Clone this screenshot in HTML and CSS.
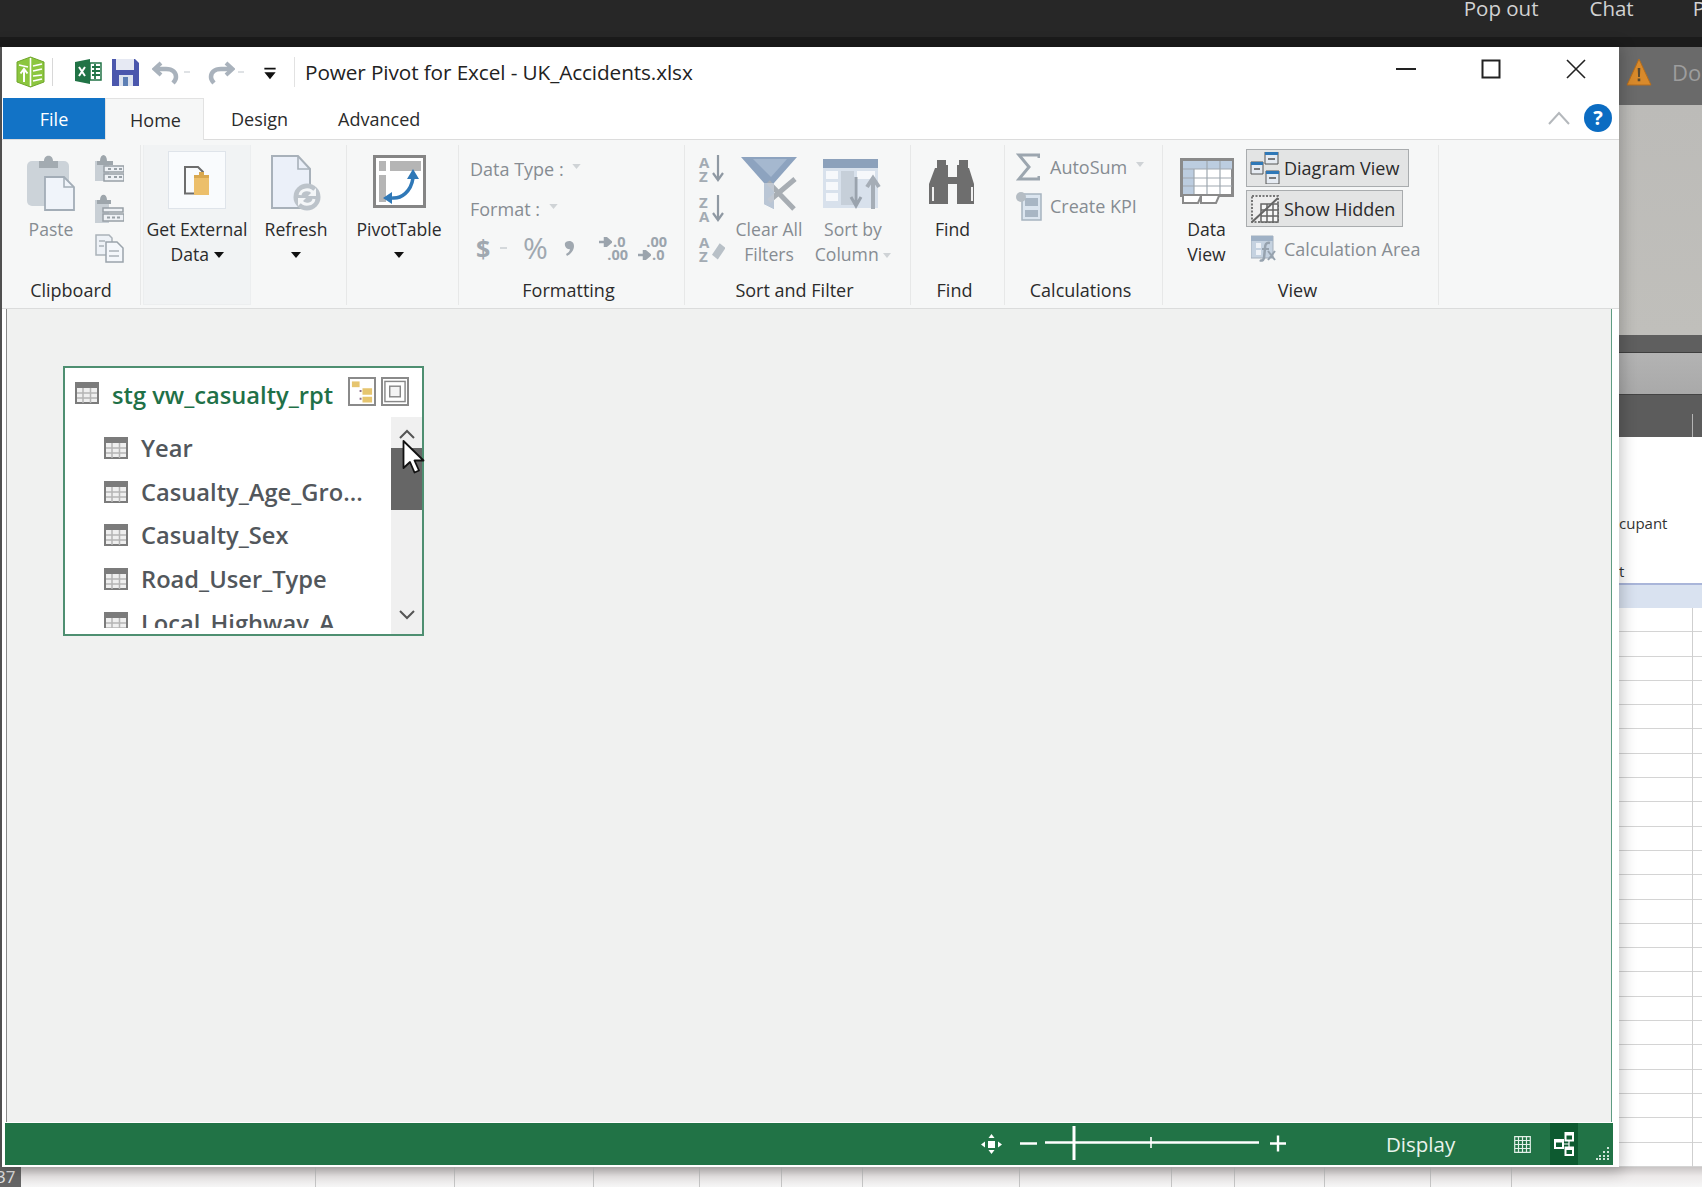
FILE: index.html
```html
<!DOCTYPE html>
<html lang="en">
<head>
<meta charset="utf-8">
<title>Power Pivot for Excel - UK_Accidents.xlsx</title>
<link rel="stylesheet" href="styles.css">
</head>
<body>
<svg class="defs" width="0" height="0">
  <symbol id="tbl" viewBox="0 0 24 22">
    <rect x="1" y="1" width="22" height="20" fill="#efefef" stroke="#7b7b7b" stroke-width="2"/>
    <rect x="1" y="1" width="22" height="5" fill="#7b7b7b"/>
    <path d="M2 11h20M2 16h20M8 6v15M15.500 6v15" stroke="#b5b5b5" stroke-width="1.500" fill="none"/>
  </symbol>
  <symbol id="dd" viewBox="0 0 10 6"><path d="M0 0h10L5 6z"/></symbol>
</svg>

<div class="topbar"><span>Pop out</span><span>Chat</span><span class="tb-p">P</span></div>
<div class="topstrip"></div>
<div class="desk">
  <div class="sliver"></div>
  <aside class="side">
    <div class="side-head"><svg width="26" height="28" viewBox="0 0 26 28"><path d="M13 1 25 27H1z" fill="#d98a2b" stroke="#b56d1d"/><path d="M11.700 10h2.600l-.4 9h-1.800zM11.700 20.500h2.600v2.800h-2.600z" fill="#5b4a30"/></svg><span>Do</span></div>
    <div class="side-grey"></div>
    <div class="side-dark1"></div>
    <div class="side-mid"></div>
    <div class="side-dark2"><i></i></div>
    <div class="side-text">
      <span>cupant</span>
      <span class="side-t">t</span>
    </div>
    <div class="side-band"></div>
    <div class="side-grid"></div>
  </aside>
</div>
<div class="sheetfoot">
  <div class="rownum">37</div><i></i><i></i><i></i><i></i><i></i><i></i><i></i><i></i><i></i><i></i><i></i><i></i><i></i>
</div>

<main class="window">
  <header class="titlebar">
    <svg class="q-pp" width="31" height="32" viewBox="0 0 31 32"><path d="M15.500 1 29 6v20l-13.500 5L2 26V6z" fill="#8cc63f" stroke="#6fa62c"/><path d="M15.500 2v28M18 10l9-2M18 15l9-2M18 20l9-1M18 25l9-2M4 9l9 2" stroke="#fff" stroke-width="1.600"/><path d="M9 26V14M5.500 17.500 9 13l3.500 4.500" stroke="#fff" stroke-width="2" fill="none"/></svg>
    <i class="q-sep1"></i>
    <svg class="q-xl" width="27" height="25" viewBox="0 0 27 25"><path d="M0 3 15 0v25L0 22z" fill="#217346"/><path d="M4 8l6 9M10 8l-6 9" stroke="#fff" stroke-width="2"/><path d="M15 4h11v17H15z" fill="#fff" stroke="#217346" stroke-width="1.500"/><path d="M17 8h8M17 12h8M17 16h8M20 5v15" stroke="#217346" stroke-width="1.800"/></svg>
    <svg class="q-save" width="27" height="28" viewBox="0 0 27 28"><path d="M0 1h23l4 4v23H0z" fill="#4b57ad"/><path d="M4 1h18v11H4z" fill="#e6e9f3"/><path d="M7 17h14v11H7z" fill="#dde3ef"/><path d="M11 19h5v9h-5z" fill="#5d7fb5"/></svg>
    <svg class="q-undo" width="29" height="26" viewBox="0 0 29 26"><path d="M9 4 2.500 10 9 16" fill="none" stroke="#a9b2bc" stroke-width="4"/><path d="M4 10h10c7 0 10 4 10 8 0 3-2 5-3 6" fill="none" stroke="#a9b2bc" stroke-width="4.500"/></svg>
    <i class="q-dash"></i>
    <svg class="q-redo" width="29" height="26" viewBox="0 0 29 26"><path d="M20 4l6.500 6-6.500 6" fill="none" stroke="#a9b2bc" stroke-width="4"/><path d="M25 10H15C8 10 5 14 5 18c0 3 2 5 3 6" fill="none" stroke="#a9b2bc" stroke-width="4.500"/></svg>
    <i class="q-dash"></i>
    <svg class="q-more" width="12" height="13" viewBox="0 0 13 15"><path d="M0 1h13v2H0zM0 6h13L6.500 14z" fill="#111"/></svg>
    <i class="q-sep2"></i>
    <h1 class="wintitle">Power Pivot for Excel - UK_Accidents.xlsx</h1>
    <div class="winctl">
      <svg width="20" height="20" viewBox="0 0 20 20"><path d="M0 10h20" stroke="#222" stroke-width="2"/></svg>
      <svg width="20" height="20" viewBox="0 0 20 20"><rect x="1.500" y="1.500" width="17" height="17" fill="none" stroke="#222" stroke-width="2"/></svg>
      <svg width="20" height="20" viewBox="0 0 20 20"><path d="M1 1l18 18M19 1 1 19" stroke="#222" stroke-width="1.600"/></svg>
    </div>
  </header>

  <nav class="tabs">
    <span class="tab tab-file">File</span>
    <span class="tab tab-home">Home</span>
    <span class="tab tab-design">Design</span>
    <span class="tab tab-adv">Advanced</span>
    <svg class="collapse" width="22" height="14" viewBox="0 0 22 14"><path d="M1 13 11 2l10 11" fill="none" stroke="#b4b8bc" stroke-width="2"/></svg>
    <span class="help">?</span>
  </nav>

  <section class="ribbon">
    <div class="group g-clip">
      <div class="gbody">
        <div class="tool tool-paste">
          <div class="slot"><svg width="48" height="56" viewBox="0 0 48 56"><rect x="0" y="6" width="42" height="45" rx="5" fill="#ccd3d9"/><path d="M12 6h5c0-7 9-7 9 0h5v7H12z" fill="#a3abb1"/><path d="M18 22h19l10 10v23H18z" fill="#f0f4fa" stroke="#a3adb7" stroke-width="1.800"/><path d="M37 22v10h10" fill="none" stroke="#a3adb7" stroke-width="1.500"/></svg></div>
          <span class="lbl off">Paste</span>
        </div>
        <div class="mini-stack">
          <svg width="29" height="29" viewBox="0 0 29 29"><rect y="7" width="14" height="20" fill="#c8cfd5"/><path d="M5 7c0-8 7-8 7 0h6v4H2V7z" fill="#9ea6ac"/><path d="M9 12h20v6H9zM9 20h20v7H9z" fill="#eef1f5" stroke="#98a0a6" stroke-width="1.500"/><path d="M13 15h3M19 15h3M24 15h3M13 23h3M19 23h3M24 23h3" stroke="#98a0a6" stroke-width="2"/></svg>
          <svg width="29" height="29" viewBox="0 0 29 29"><rect y="6" width="14" height="23" fill="#c8cfd5"/><path d="M5 6c0-7 7-7 7 0h4v4H2V6z" fill="#9ea6ac"/><path d="M8 14h20v4H8zM8 20h21v7H8z" fill="#eef1f5" stroke="#98a0a6" stroke-width="1.500"/><path d="M12 23.500h3M17 23.500h3M22 23.500h3" stroke="#98a0a6" stroke-width="2"/></svg>
          <svg width="29" height="29" viewBox="0 0 29 29"><path d="M1 1h13l3 3v17H1z" fill="#eef2f7" stroke="#aab2b9" stroke-width="1.500"/><path d="M11 8h11l6 6v14H11z" fill="#f4f7fb" stroke="#9ba4ac" stroke-width="1.500"/><path d="M4 7h6M4 12h5M14 17h10M14 22h10" stroke="#aab2b9" stroke-width="1.500"/></svg>
        </div>
      </div>
      <div class="glabel">Clipboard</div>
    </div>

    <div class="group g-ext">
      <div class="tool tool-ext">
        <div class="ext-btn"><svg width="26" height="29" viewBox="0 0 26 29"><path d="M12 27.500H1V1h13l5 5v4" fill="none" stroke="#6d6d6d" stroke-width="2"/><path d="M10 12h15v17H10z" fill="#ecbf6b"/><path d="M10 9h15v3H10zM15 6h5v3h-5z" fill="#d9a84f"/></svg></div>
        <span class="lbl">Get External<br>Data <svg class="dd dd-ink" width="10" height="6"><use href="#dd"/></svg></span>
      </div>
      <div class="tool tool-refresh">
        <div class="slot"><svg width="50" height="56" viewBox="0 0 50 56"><path d="M1 1h26l12 13v39H1z" fill="#ebf0f9" stroke="#a8b1ba" stroke-width="2"/><path d="M27 1v13h12" fill="none" stroke="#a8b1ba" stroke-width="1.600"/><circle cx="36" cy="42" r="13.500" fill="#bcc3ca"/><path d="M29 40c1-6 10-7 13-2M43 44c-1 6-10 7-13 2" fill="none" stroke="#f4f6f8" stroke-width="3"/><path d="M45 33v8h-8zM27 51v-8h8z" fill="#f4f6f8"/></svg></div>
        <span class="lbl">Refresh<br><svg class="dd dd-ink" width="10" height="6"><use href="#dd"/></svg></span>
      </div>
    </div>

    <div class="group g-pivot">
      <div class="tool tool-pivot">
        <div class="slot"><svg width="53" height="53" viewBox="0 0 53 53"><rect x="1.500" y="1.500" width="50" height="50" fill="#fff" stroke="#858585" stroke-width="3"/><path d="M17 6h31v10H17zM6 6h7v10H6zM6 20h7v27H6z" fill="#b5b5b5"/><path d="M19 43c9 1 19-6 21-20" fill="none" stroke="#2f78b7" stroke-width="3.500"/><path d="M40 14l6 10h-12zM19 37v12l-9-6z" fill="#2f78b7"/></svg></div>
        <span class="lbl">PivotTable<br><svg class="dd dd-ink" width="10" height="6"><use href="#dd"/></svg></span>
      </div>
    </div>

    <div class="group g-format">
      <div class="gbody format-body">
        <div class="fm-row"><span class="off">Data Type :</span><svg class="dd dd-off dt" width="9" height="5"><use href="#dd"/></svg></div>
        <div class="fm-row"><span class="off">Format :</span><svg class="dd dd-off ft" width="9" height="5"><use href="#dd"/></svg></div>
        <div class="fm-row fm-icons">
          <span class="fm-dollar">$</span><i class="fm-dash"></i>
          <span class="fm-pct">%</span>
          <svg class="fm-comma" width="12" height="18" viewBox="0 0 12 18"><path d="M1 4c2-3 9-3 9 3 0 4-3 8-7 10l-1-2c2-1 4-3 4-5-2 1-6-2-5-6z" fill="#a0a8b0"/></svg>
          <span class="fm-dec"><svg width="13" height="10" viewBox="0 0 13 10"><path d="M0 5h8M6 0l6 5-6 5z" stroke="#9ba4ad" stroke-width="2.500" fill="#9ba4ad"/></svg><b>.0</b><b class="wide">.00</b></span>
          <span class="fm-dec"><b class="wide">.00</b><svg width="13" height="10" viewBox="0 0 13 10"><path d="M0 5h8M6 0l6 5-6 5z" stroke="#9ba4ad" stroke-width="2.500" fill="#9ba4ad"/></svg><b>.0</b></span>
        </div>
      </div>
      <div class="glabel">Formatting</div>
    </div>

    <div class="group g-sort">
      <div class="gbody">
        <div class="sort-stack">
          <div class="az"><span>A<br>Z</span><svg width="12" height="27" viewBox="0 0 12 27"><path d="M6 0v24M1 18l5 7 5-7" fill="none" stroke="#8f99a3" stroke-width="2.200"/></svg></div>
          <div class="az"><span>Z<br>A</span><svg width="12" height="27" viewBox="0 0 12 27"><path d="M6 0v24M1 18l5 7 5-7" fill="none" stroke="#8f99a3" stroke-width="2.200"/></svg></div>
          <div class="az"><span>A<br>Z</span><svg width="14" height="27" viewBox="0 0 14 27"><path d="M8 8l6 5-8 12-6-5z" fill="#b8c0c7"/></svg></div>
        </div>
        <div class="tool tool-clear">
          <div class="slot"><svg width="56" height="56" viewBox="0 0 56 56"><path d="M0 2h56L33 28v26l-10-5V28z" fill="#8da3bf"/><path d="M12 4h34L30 22z" fill="#a5b8cf"/><path d="M27 27 53 54M54 24 28 46" stroke="#a7adb3" stroke-width="5"/><path d="M23 28v21l10 5V28z" fill="#c9d2dc" opacity=".75"/></svg></div>
          <span class="lbl off">Clear All<br>Filters</span>
        </div>
        <div class="tool tool-bycol">
          <div class="slot"><svg width="60" height="56" viewBox="0 0 60 56"><path d="M0 4h55v49H0z" fill="#d8e1ec"/><path d="M0 4h55v9H0z" fill="#8ca1bb"/><path d="M3 16h12v8H3zM3 27h12v8H3zM3 38h12v8H3zM34 16h18v8H34z" fill="#f6f8fb"/><path d="M18 16h13v34H18z" fill="#c6cfd9"/><path d="M33 22v28M28 42l5 9 5-9" fill="none" stroke="#9aa3ad" stroke-width="3"/><path d="M50 54V24M44 32l6-9 6 9" fill="none" stroke="#a5adb6" stroke-width="4"/></svg></div>
          <span class="lbl off">Sort by<br>Column <svg class="dd dd-off" width="8" height="5"><use href="#dd"/></svg></span>
        </div>
      </div>
      <div class="glabel">Sort and Filter</div>
    </div>

    <div class="group g-find">
      <div class="gbody">
        <div class="tool tool-find">
          <div class="slot"><svg width="47" height="44" viewBox="0 0 47 44"><path d="M8 0h9v5h2v12h9V5h2V0h9v8h1l5 16v20H28V24h-9v20H0V24L6 8h2z" fill="#6e6e6e"/><path d="M3 27v14h2V27zM44 27v14h-2V27z" fill="#f0f0f0"/></svg></div>
          <span class="lbl">Find</span>
        </div>
      </div>
      <div class="glabel">Find</div>
    </div>

    <div class="group g-calc">
      <div class="gbody calc-body">
        <div class="calc-row"><span class="calc-ic"><svg width="24" height="28" viewBox="0 0 24 28"><path d="M23 5V2H3l10 12L3 26h20v-3" fill="none" stroke="#9ca6af" stroke-width="3"/></svg></span><span class="off">AutoSum</span><svg class="dd dd-off as" width="8" height="5"><use href="#dd"/></svg></div>
        <div class="calc-row"><span class="calc-ic"><svg width="26" height="30" viewBox="0 0 26 30"><path d="M6 3h19v26H6z" fill="#dbe5ef" stroke="#a7b4c0" stroke-width="1.500"/><path d="M9 7h13v8H9zM9 19h13v7H9z" fill="#a8b6c4"/><circle cx="5" cy="6" r="5" fill="#b5bdc4"/></svg></span><span class="off">Create KPI</span></div>
      </div>
      <div class="glabel">Calculations</div>
    </div>

    <div class="group g-view">
      <div class="gbody">
        <div class="tool tool-data">
          <div class="slot"><svg width="54" height="47" viewBox="0 0 54 47"><path d="M1.500 1.500h51v36h-51z" fill="#fff" stroke="#8a8a8a" stroke-width="3"/><path d="M3 3h49v8H3zM3 11h11v25H3z" fill="#bccde0"/><path d="M14 11v25M27 3v33M40 3v33M3 11h49M3 20h49M3 28h49" stroke="#9fa8b0" stroke-width="1.200"/><path d="M3 38v7h15l3-7M21 38v7h15l3-7" fill="#fff" stroke="#8a8a8a" stroke-width="2"/></svg></div>
          <span class="lbl">Data<br>View</span>
        </div>
        <div class="view-stack">
          <div class="vbtn vbtn-on vb-diagram"><svg width="30" height="32" viewBox="0 0 30 32"><path d="M1 10h12v12H1z" fill="#e6ebf2" stroke="#555"/><path d="M1 10h12v3H1z" fill="#2f78b7"/><path d="M15 0h13v12H15z" fill="#e6ebf2" stroke="#555"/><path d="M15 0h13v3H15z" fill="#2f78b7"/><path d="M16 19h13v13H16z" fill="#e6ebf2" stroke="#555"/><path d="M16 19h13v3H16z" fill="#2f78b7"/><path d="M4 17h6M18 7h7M19 26h7" stroke="#555" stroke-width="1.500"/></svg><span>Diagram View</span></div>
          <div class="vbtn vbtn-on vb-hidden"><svg width="28" height="28" viewBox="0 0 28 28"><path d="M1 1h26v26H1z" fill="#eee" stroke="#777" stroke-width="2" stroke-dasharray="2 1.500"/><path d="M10 9h17v18H10z" fill="#f7f7f7" stroke="#666" stroke-width="1.500"/><path d="M10 15h17M10 21h17M16 9v18M22 9v18" stroke="#666" stroke-width="1.500"/><path d="M1 27 27 3" stroke="#666" stroke-width="2"/></svg><span>Show Hidden</span></div>
          <div class="vbtn vb-calc"><svg width="27" height="28" viewBox="0 0 27 28"><path d="M0 1h22v22H0z" fill="#c5d2e0" stroke="#a4b0bc"/><path d="M0 1h22v5H0z" fill="#9fb1c5"/><path d="M5 8h5v5H5zM5 15h5v5H5z" fill="#eef2f7"/><path d="M19 8c-4-1-5 2-5 5l-1 10c-1 3-3 3-4 2" fill="none" stroke="#96a2ae" stroke-width="2.500"/><path d="M11 14h7M17 16l7 9M24 16l-7 9" stroke="#96a2ae" stroke-width="2"/></svg><span class="off">Calculation Area</span></div>
        </div>
      </div>
      <div class="glabel">View</div>
    </div>
  </section>

  <section class="canvas">
    <article class="node">
      <div class="node-head">
        <svg class="node-ic" width="24" height="22"><use href="#tbl"/></svg>
        <h2 class="node-title">stg vw_casualty_rpt</h2>
        <span class="node-btn"><svg width="25" height="25" viewBox="0 0 25 25"><path d="M2 2h8v6H2z" fill="#e6c56f"/><path d="M13 9h10v7H13zM13 18h10v6H13z" fill="#e6c56f"/><path d="M10 11h2v2h-2zM10 19h2v2h-2z" fill="#8a6a8a"/></svg></span>
        <span class="node-btn"><svg width="25" height="25" viewBox="0 0 25 25"><rect x="2" y="2" width="21" height="21" fill="none" stroke="#888" stroke-width="1.500"/><rect x="7" y="7" width="11" height="11" fill="#f4f4f4" stroke="#888" stroke-width="1.500"/></svg></span>
      </div>
      <div class="node-body">
        <ul class="fields">
          <li><svg width="24" height="22"><use href="#tbl"/></svg>Year</li>
          <li><svg width="24" height="22"><use href="#tbl"/></svg>Casualty_Age_Gro...</li>
          <li><svg width="24" height="22"><use href="#tbl"/></svg>Casualty_Sex</li>
          <li><svg width="24" height="22"><use href="#tbl"/></svg>Road_User_Type</li>
          <li><svg width="24" height="22"><use href="#tbl"/></svg>Local_Highway_A...</li>
        </ul>
        <div class="scroll">
          <div class="sc-btn sc-up"><svg width="16" height="10" viewBox="0 0 16 10"><path d="M1 9l7-7 7 7" fill="none" stroke="#555" stroke-width="2"/></svg></div>
          <div class="sc-thumb"></div>
          <div class="sc-track"></div>
          <div class="sc-btn sc-down"><svg width="16" height="10" viewBox="0 0 16 10"><path d="M1 1l7 7 7-7" fill="none" stroke="#555" stroke-width="2"/></svg></div>
        </div>
      </div>
      <svg class="cursor" width="23" height="34" viewBox="0 0 23 34"><path d="M1.500 1v27l6.500-6 4.500 10.500 4.500-2-4.500-10h9z" fill="#fff" stroke="#111" stroke-width="1.800" stroke-linejoin="round"/></svg>
    </article>
  </section>

  <footer class="status">
    <svg class="st-move" width="21" height="22" viewBox="0 0 21 22"><rect x="7" y="8" width="7" height="7" fill="#fff"/><path d="M10.500 1l3 4h-6zM10.500 21l-3-4h6zM0 11.500l4-3v6zM21 11.500l-4 3v-6z" fill="#fff"/></svg>
    <svg class="st-zoom" width="266" height="42" viewBox="0 0 266 42"><path d="M0 20.500h17M25 19.500h214M250 20.500h16M258 12.500v16" stroke="#fff" stroke-width="2.400"/><path d="M54 3v34" stroke="#fff" stroke-width="3"/><path d="M131 14v11" stroke="#fff" stroke-width="1.600"/></svg>
    <span class="st-display">Display</span>
    <svg class="st-grid" width="17" height="17" viewBox="0 0 17 17"><path d="M.7.7h15.600v15.600H.7zM.7 4.500h15.600M.7 8.500h15.600M.7 12.500h15.600M4.500.7v15.600M8.500.7v15.600M12.500.7v15.600" fill="none" stroke="#e3f0e8" stroke-width="1.200"/></svg>
    <span class="st-active"><svg width="20" height="24" viewBox="0 0 20 24"><path d="M1 8h8v8H1zM11.500 1h7.500v7.500h-7.500zM11.500 15.500h7.500V23h-7.500z" fill="#0d5a30" stroke="#fff" stroke-width="2"/><path d="M1 8h8v2.500H1zM11.500 1H19v2.500h-7.500zM11.500 15.500H19V18h-7.500z" fill="#fff"/><path d="M9 12h6M15 8.500v7" stroke="#fff" stroke-width="1.200"/></svg></span>
    <svg class="st-grip" width="14" height="14" viewBox="0 0 14 14"><path d="M11 1h2v2h-2zM11 5h2v2h-2zM7 5h2v2H7zM11 9h2v2h-2zM7 9h2v2H7zM3 9h2v2H3zM11 12h2v2h-2zM7 12h2v2H7zM3 12h2v2H3zM0 12h2v2H0z" fill="#cfe4d8"/></svg>
  </footer>
</main>
</body>
</html>
```
FILE: styles.css
```css
* { box-sizing: border-box; }
html, body { margin: 0; padding: 0; }
body {
  position: relative;
  width: 1702px;
  height: 1187px;
  overflow: hidden;
  background: #f2f2f2;
  font-family: "Open Sans", "Liberation Sans", sans-serif;
  color: #2b2b2b;
}
.defs { position: absolute; }
i { display: block; }

/* backdrop */
.topbar {
  height: 37px;
  background: #272727;
  color: #d2d2d2;
  font-size: 20.500px;
  line-height: 16px;
  display: flex;
  justify-content: flex-end;
  gap: 51px;
  margin-right: -3px;
  overflow: hidden;
}
.tb-p { margin-left: 8px; }
.topstrip { height: 10px; background: #1b1b1b; }
.desk { height: 1120px; display: flex; justify-content: space-between; }
.sliver { width: 2px; background: #5c5c5c; }
.side { width: 83px; display: flex; flex-direction: column; background: #fff; overflow: hidden; }
.side-head { height: 58px; background: #6a6a6a; display: flex; align-items: center; gap: 20px; color: #9d9d9d; font-size: 22px; padding: 0 0 8px 7px; white-space: nowrap; }
.side-grey { height: 230px; background: linear-gradient(#bcbbb8, #c0bfbb); }
.side-dark1 { height: 18px; background: #5f5f5f; border-bottom: 1px solid #3e3e3e; }
.side-mid { height: 42px; background: linear-gradient(#b3b3b3, #a9a9a9); border-bottom: 1px solid #444; }
.side-dark2 { height: 42px; background: #5c5c5c; position: relative; }
.side-dark2 i { position: absolute; left: 73px; top: 19px; width: 1px; height: 23px; background: #b4b4b4; }
.side-text { height: 146px; background: #fff; display: flex; flex-direction: column; font-size: 15px; color: #333; padding-top: 76px; line-height: 20px; }
.side-t { margin-top: 28px; }
.side-band { height: 25px; background: #d9e2f0; border-top: 2px solid #a9b5d9; }
.side-grid {
  flex: 1;
  background-color: #fff;
  background-image:
    linear-gradient(90deg, transparent 73px, #cfcfcf 73px, #cfcfcf 74px, transparent 74px),
    repeating-linear-gradient(transparent 0, transparent 23.300px, #d4d4d4 23.300px, #d4d4d4 24.300px);
}
.sheetfoot {
  height: 20px;
  display: grid;
  grid-template-columns: 178px 138px 139px 139px 106px 82px 81px 157px 152px 63px 90px 106px 81px 181px;
  background: linear-gradient(#c9c5c5, #ece9e9 45%, #f6f6f6);
}
.sheetfoot i { border-right: 1px solid #c6c6c6; }
.rownum { width: 21px; background: #666; color: #e4e4e4; font-size: 17px; line-height: 20px; text-indent: -4px; overflow: hidden; grid-column: 1; }
.sheetfoot i:nth-child(2) { display: none; }

/* window */
.window {
  position: absolute;
  left: 2px;
  top: 47px;
  width: 1617px;
  height: 1120px;
  background: #fff;
  display: flex;
  flex-direction: column;
  box-shadow: 0 2px 14px 3px rgba(0, 0, 0, .22);
}
.titlebar { height: 51px; display: flex; align-items: center; flex: none; position: relative; padding-bottom: 2px; }
.q-pp { margin-left: 13px; }
.q-sep1 { width: 1px; height: 28px; background: #d8d8d8; margin-left: 6px; }
.q-xl { margin-left: 22px; }
.q-save { margin-left: 10px; }
.q-undo { margin-left: 13px; }
.q-dash { width: 6px; height: 2px; background: #dfe2e5; margin: 0 0 0 3px; }
.q-redo { margin-left: 16px; }
.q-more { margin-left: 20px; margin-top: 4px; }
.q-sep2 { width: 1px; height: 30px; background: #e2e2e2; margin-left: 18px; }
.wintitle { margin: 0 0 0 10px; font-size: 20.750px; font-weight: 400; color: #222; letter-spacing: -.1px; white-space: nowrap; }
.winctl { margin-left: auto; display: flex; gap: 65px; padding-right: 33px; margin-top: -5px; }
.tabs { height: 42px; display: flex; align-items: stretch; border-bottom: 1px solid #dcdcdc; flex: none; font-size: 18px; }
.tab { display: flex; align-items: center; justify-content: center; height: 42px; }
.tab-file { margin-left: 1px; width: 102px; height: 41px; background: #1273c6; color: #fff; }
.tab-home { width: 99px; background: #f6f7f7; border: 1px solid #e2e2e2; border-bottom: 0; padding-left: 2px; }
.tab-design { margin-left: 27px; }
.tab-adv { margin-left: 50px; }
.collapse { margin-left: auto; margin-top: 13px; }
.help { margin: 6px 7px 0 14px; width: 28px; height: 28px; border-radius: 50%; background: #0b6cc2; color: #fff; font-weight: 700; font-size: 20px; line-height: 28px; text-align: center; }

.ribbon { height: 169px; flex: none; display: flex; align-items: flex-start; background: #f6f7f7; border-bottom: 1px solid #dbdcdc; font-size: 18px; }
.group { height: 160px; margin-top: 5px; flex: none; display: flex; flex-direction: column; border-right: 1px solid #e7e8e8; }
.gbody { height: 134px; display: flex; flex: none; }
.glabel { height: 22px; line-height: 22px; text-align: center; color: #2b2b2b; padding-right: 6px; }
.g-clip .glabel { padding-right: 0; }
.tool { display: flex; flex-direction: column; align-items: center; padding-top: 10px; flex: none; }
.slot { height: 62px; display: flex; justify-content: center; align-items: flex-start; flex: none; }
.lbl { line-height: 25px; text-align: center; white-space: nowrap; color: #2b2b2b; font-size: 17.600px; }
.off { color: #868c92; }
.lbl.off { color: #868c92; }
.dd { vertical-align: 3px; }
.dd-ink { fill: #111; }
.dd-off { fill: #cfd3d6; }

.g-clip { width: 139px; }
.tool-paste { width: 60px; margin-left: 19px; }
.mini-stack { margin-left: 14px; padding-top: 9px; display: flex; flex-direction: column; gap: 11px; }
.g-ext { width: 206px; display: flex; flex-direction: row; align-items: flex-start; }
.tool-ext { width: 108px; height: 160px; margin-left: 2px; padding-top: 6px; background: #f1f3f4; border: 1px solid #eceeef; border-top: 0; }
.ext-btn { width: 58px; height: 58px; background: #f9fbfd; border: 1px solid #dfe4ea; display: flex; align-items: center; justify-content: center; margin-bottom: 8px; flex: none; }
.tool-refresh { width: 90px; }
.g-pivot { width: 112px; }
.tool-pivot { width: 104px; }
.g-format { width: 226px; }
.format-body { flex-direction: column; padding: 4px 0 0 11px; }
.fm-row { height: 40px; display: flex; align-items: center; }
.dt { margin-left: 8px; margin-top: -5px; }
.ft { margin-left: 9px; margin-top: -5px; }
.fm-icons { color: #a0a8b0; margin-left: 6px; margin-top: -1px; }
.fm-dollar { font-size: 25px; font-weight: 700; width: 24px; }
.fm-dash { width: 7px; height: 2px; background: #d4d8db; }
.fm-pct { font-size: 30px; margin-left: 16px; width: 40px; line-height: 30px; }
.fm-comma { margin-left: 1px; margin-right: 23px; flex: none; }
.fm-dec { display: grid; grid-template-columns: 14px auto; width: 29px; margin-right: 10px; font-size: 14.500px; line-height: 13px; align-items: center; }
.fm-dec b { font-weight: 700; color: #9ba4ad; }
.fm-dec .wide { grid-column: 1 / 3; text-align: right; }
.g-sort { width: 226px; }
.sort-stack { margin-left: 14px; width: 26px; padding-top: 10px; display: flex; flex-direction: column; gap: 12px; flex: none; }
.az { display: flex; height: 28px; font-size: 15px; line-height: 14px; font-weight: 700; color: #a3abb3; }
.az span { width: 13px; }
.tool-clear { width: 66px; margin-left: 11px; }
.tool-bycol { width: 90px; margin-left: 6px; }
.g-find { width: 94px; }
.tool-find { width: 83px; padding-top: 15px; }
.tool-find .slot { height: 57px; }
.g-calc { width: 158px; }
.calc-body { flex-direction: column; padding: 3px 0 0 11px; }
.calc-row { height: 38.500px; display: flex; align-items: center; }
.calc-ic { width: 34px; display: flex; }
.as { margin-left: 9px; margin-top: -6px; }
.g-view { width: 276px; }
.tool-data { width: 81px; margin-left: 3px; padding-top: 13px; }
.tool-data .slot { height: 59px; }
.view-stack { padding-top: 4px; display: flex; flex-direction: column; gap: 3px; margin-left: -1px; }
.vbtn { height: 37px; display: flex; align-items: center; }
.vbtn-on { background: #e3e4e4; border: 1px solid #a9acae; }
.vbtn svg { flex: none; }
.vb-diagram { width: 163px; height: 38px; padding-left: 3px; gap: 4px; }
.vb-hidden { width: 157px; padding-left: 4px; gap: 5px; }
.vb-calc { padding-left: 5px; gap: 6px; white-space: nowrap; }

/* canvas */
.canvas { flex: 1; margin: 0 7px 1px 4px; background: #f0f1f0; position: relative; border-right: 1px solid #5f9c82; border-left: 1px solid #8a8a8a; min-height: 0; }
.node { position: absolute; left: 56px; top: 57px; width: 361px; height: 270px; background: #fff; border: 2px solid #4e8f71; display: flex; flex-direction: column; }
.node-head { height: 49px; display: flex; align-items: center; flex: none; padding-left: 10px; }
.node-ic { flex: none; }
.node-title { margin: 5px 0 0 13px; font-size: 23.700px; font-weight: 600; color: #1f7148; width: 236px; white-space: nowrap; }
.node-btn { width: 28px; height: 29px; border: 2px solid #8a8a8a; display: flex; align-items: center; justify-content: center; margin-right: 5px; flex: none; margin-top: -2px; }
.node-body { flex: 1; display: flex; min-height: 0; }
.fields { list-style: none; margin: 0; padding: 9px 0 0 39px; width: 324px; height: 211px; overflow: hidden; font-size: 23.700px; font-weight: 600; color: #52575c; flex: none; }
.fields li { height: 43.700px; display: flex; align-items: center; gap: 13px; white-space: nowrap; }
.fields svg { flex: none; }
.scroll { width: 31px; margin-left: 2px; flex: none; display: flex; flex-direction: column; background: #f0f0f0; }
.sc-btn { display: flex; align-items: center; justify-content: center; flex: none; }
.sc-up { height: 31px; padding-top: 2px; }
.sc-thumb { height: 62px; background: #666; flex: none; }
.sc-track { flex: 1; }
.sc-down { height: 38px; }
.cursor { position: absolute; left: 337px; top: 72px; }

/* status */
.status { height: 42px; flex: none; margin: 0 6px 2px 3px; background: #217346; display: flex; align-items: center; color: #e9f3ed; }
.st-move { margin-left: auto; }
.st-zoom { margin-left: 18px; }
.st-display { width: 128px; margin-left: 100px; font-size: 20.500px; }
.st-active { width: 28px; height: 42px; margin-left: 19px; background: #0d5a30; display: flex; align-items: center; justify-content: center; }
.st-grip { margin: 18px 3px 0 18px; }
```
